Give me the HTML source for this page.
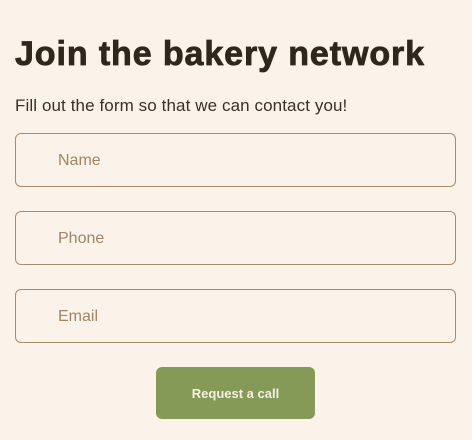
<!DOCTYPE html>
<html><head><style>
html,body{margin:0;padding:0;background:#fbf3ea;width:472px;height:440px;overflow:hidden;font-family:"Liberation Sans",sans-serif}
h1{position:absolute;left:15px;top:34px;margin:0;font-size:34px;font-weight:900;color:#30261b;letter-spacing:0.9px;line-height:40px;white-space:nowrap;-webkit-text-stroke:0.8px #30261b}
p{position:absolute;left:15px;top:96px;margin:0;font-size:17px;color:#3a2f24;line-height:20px;white-space:nowrap;letter-spacing:0.1px}
.in{position:absolute;left:15px;width:439px;height:52px;border:1px solid #a88a6c;border-radius:6px;box-sizing:content-box}
.in span{position:absolute;left:42px;top:17px;font-size:16px;color:#a08466;line-height:20px}
.btn{position:absolute;left:156px;top:367px;width:159px;height:52px;background:#859a56;border-radius:6px;color:#f5efe5;font-size:13px;font-weight:bold;text-align:center;line-height:53px}
</style></head><body>
<h1>Join the bakery network</h1>
<p>Fill out the form so that we can contact you!</p>
<div class="in" style="top:133px"><span>Name</span></div>
<div class="in" style="top:211px"><span>Phone</span></div>
<div class="in" style="top:289px"><span>Email</span></div>
<div class="btn">Request a call</div>
</body></html>
